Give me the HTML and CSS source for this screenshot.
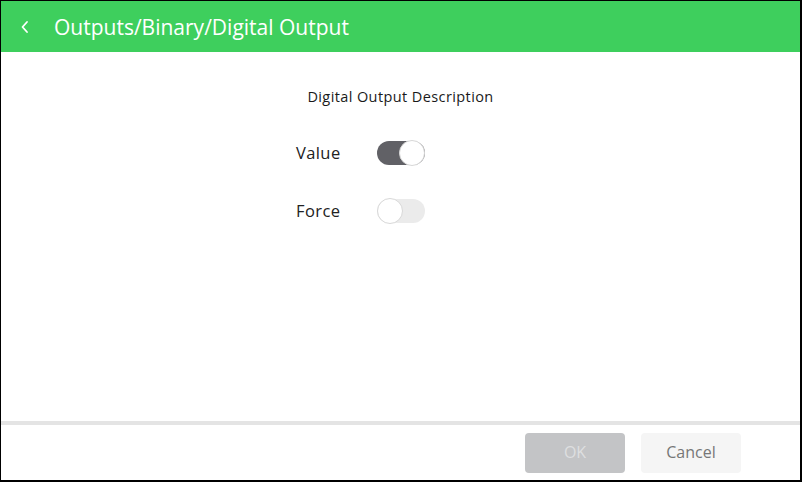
FILE: index.html
```html
<!DOCTYPE html>
<html>
<head>
<meta charset="utf-8">
<link rel="stylesheet" href="styles.css">
</head>
<body>
<div class="dialog">
  <header class="header">
    <button class="back" aria-label="Back">
      <svg width="10" height="14" viewBox="0 0 10 14"><polyline points="7,2 2.5,7 7,12" fill="none" stroke="#fff" stroke-width="1.8" stroke-linecap="round" stroke-linejoin="round"/></svg>
    </button>
    <h1 class="title">Outputs/Binary/Digital Output</h1>
  </header>
  <main class="content">
    <p class="desc">Digital Output Description</p>
    <div class="form">
      <span class="label">Value</span>
      <span class="toggle on"><span class="knob"></span></span>
      <span class="label">Force</span>
      <span class="toggle"><span class="knob"></span></span>
    </div>
  </main>
  <footer class="footer">
    <button class="btn ok">OK</button>
    <button class="btn cancel">Cancel</button>
  </footer>
</div>
</body>
</html>
```

FILE: styles.css
```css
* { box-sizing: border-box; }
html, body { margin: 0; padding: 0; background: #fff; }
body { font-family: "Open Sans", "Lato", sans-serif; color: #222; }
.dialog {
  width: 802px;
  height: 482px;
  border-style: solid;
  border-color: #000;
  border-width: 1px 2px 2px 1px;
  display: flex;
  flex-direction: column;
}
.header {
  height: 51px;
  background: #3ecf5d;
  display: flex;
  align-items: center;
  flex: none;
}
.back {
  width: 52px;
  height: 51px;
  border: 0;
  background: transparent;
  padding: 0 0 0 19px;
  display: flex;
  align-items: center;
  justify-content: flex-start;
}
.back svg { display: block; }
.title {
  margin: 0 0 0 1px;
  font-weight: 400;
  font-size: 21px;
  color: #fff;
  letter-spacing: 0;
}
.content {
  flex: 1;
  padding-top: 35px;
}
.desc {
  margin: 0;
  text-align: center;
  font-size: 14.5px;
  line-height: 20px;
  letter-spacing: 0.4px;
  color: #1a1a1a;
}
.form {
  margin: 34px 0 0 295px;
  display: grid;
  grid-template-columns: 81px 48px;
  row-gap: 34px;
  align-items: center;
}
.label { font-size: 16.5px; line-height: 24px; letter-spacing: 0.4px; color: #222; }
.toggle {
  position: relative;
  width: 48px;
  height: 24px;
  border-radius: 12px;
  background: #ebebeb;
  display: block;
}
.toggle.on { background: #616166; }
.knob {
  position: absolute;
  top: -1px;
  left: 0;
  width: 26px;
  height: 26px;
  border-radius: 50%;
  background: #fff;
  border: 1px solid #d8d8d8;
}
.toggle.on .knob { left: 22px; }
.footer {
  flex: none;
  border-top: 4px solid #e4e4e4;
  display: flex;
  justify-content: flex-end;
  gap: 16px;
  padding: 8px 59px 7px 0;
}
.btn {
  width: 100px;
  height: 40px;
  border: 0;
  border-radius: 4px;
  font-family: inherit;
  font-size: 16px;
  line-height: 20px;
  padding: 0 0 3px;
}
.ok { background: #c3c4c6; color: #dedfe0; }
.cancel { background: #f5f5f5; color: #777; }
```
